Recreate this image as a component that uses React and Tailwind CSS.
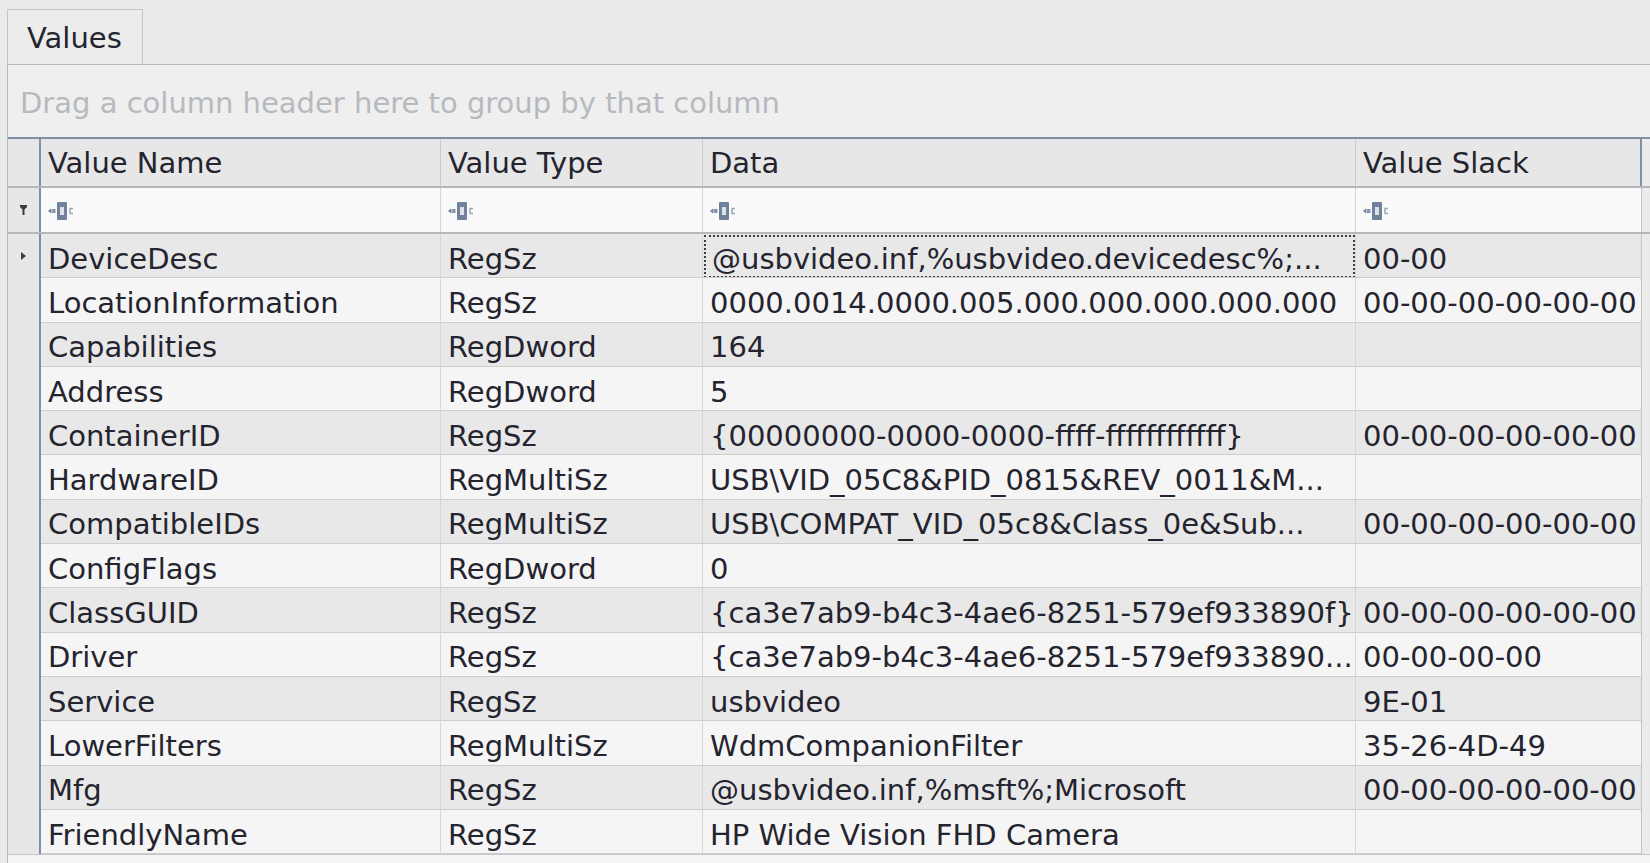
import React from "react";

const rows = [
  ["DeviceDesc", "RegSz", "@usbvideo.inf,%usbvideo.devicedesc%;...", "00-00"],
  ["LocationInformation", "RegSz", "0000.0014.0000.005.000.000.000.000.000", "00-00-00-00-00-00"],
  ["Capabilities", "RegDword", "164", ""],
  ["Address", "RegDword", "5", ""],
  ["ContainerID", "RegSz", "{00000000-0000-0000-ffff-ffffffffffff}", "00-00-00-00-00-00"],
  ["HardwareID", "RegMultiSz", "USB\\VID_05C8&PID_0815&REV_0011&M...", ""],
  ["CompatibleIDs", "RegMultiSz", "USB\\COMPAT_VID_05c8&Class_0e&Sub...", "00-00-00-00-00-00"],
  ["ConfigFlags", "RegDword", "0", ""],
  ["ClassGUID", "RegSz", "{ca3e7ab9-b4c3-4ae6-8251-579ef933890f}", "00-00-00-00-00-00"],
  ["Driver", "RegSz", "{ca3e7ab9-b4c3-4ae6-8251-579ef933890...", "00-00-00-00"],
  ["Service", "RegSz", "usbvideo", "9E-01"],
  ["LowerFilters", "RegMultiSz", "WdmCompanionFilter", "35-26-4D-49"],
  ["Mfg", "RegSz", "@usbvideo.inf,%msft%;Microsoft", "00-00-00-00-00-00"],
  ["FriendlyName", "RegSz", "HP Wide Vision FHD Camera", ""],
];

const headers = ["Value Name", "Value Type", "Data", "Value Slack"];
const colW = ["w-[400px]", "w-[262px]", "w-[653px]", "w-[286px]"];

const indicatorCls =
  "w-[33px] shrink-0 border-r-2 border-[#7f8fa5] bg-[#e7e7e7] flex items-center justify-center";

// the little "a[b]c" contains-operator glyph of the auto filter row
const ContainsIcon = () => (
  <svg width="27" height="20" viewBox="0 0 27 20">
    <path d="M0 10 L3 7.5 L3 12.5 Z" fill="#6e829c" />
    <rect x="3.5" y="8" width="4" height="4" fill="#8696ac" />
    <rect x="9" y="1" width="10" height="18" rx="1" fill="#6e829c" />
    <rect x="12" y="6" width="4" height="8" fill="#dde2e9" />
    <path d="M25 7.5 h-3 v5 h3" stroke="#9aa7b8" strokeWidth="1.5" fill="none" />
  </svg>
);

const FunnelIcon = () => (
  <svg width="7" height="10" viewBox="0 0 7 10">
    <path d="M0 0 H7 V2 L4.5 4.5 V10 H2.5 V4.5 L0 2 Z" fill="#3a3d48" />
  </svg>
);

const RowArrow = () => (
  <svg width="5" height="8" viewBox="0 0 5 8">
    <path d="M0 0 L5 4 L0 8 Z" fill="#3a3d48" />
  </svg>
);

export default function App() {
  return (
    <div className="w-[1650px] h-[863px] bg-[#ebebeb] flex flex-col overflow-hidden text-[29px] text-[#24242f] font-['DejaVu_Sans',sans-serif] leading-none">
      {/* Tab strip */}
      <div className="h-[64px] shrink-0 flex items-end pl-[7px]">
        <div className="w-[136px] h-[55px] border border-b-0 border-[#c4c4c4] bg-[#ececec] flex items-center pl-[19px] pt-[2px]">
          Values
        </div>
      </div>

      {/* Panel */}
      <div className="flex-1 ml-[7px] border-l border-t border-[#b7b9bb] flex flex-col min-h-0">
        {/* Group panel */}
        <div className="h-[72px] shrink-0 bg-[#efefef] flex items-center pl-[12px] pt-[4px] text-[#b6babe]">
          Drag a column header here to group by that column
        </div>

        {/* Column headers */}
        <div className="h-[51px] shrink-0 flex border-t-2 border-b-2 border-t-[#7f8fa5] border-b-[#b3b7bb] bg-[#e7e7e7]">
          <div className={indicatorCls} />
          {headers.map((h, i) => (
            <div
              key={h}
              className={`${colW[i]} shrink-0 flex items-center pl-[7px] pt-[2px] border-r ${
                i === 3 ? "border-r-2 border-[#7f8fa5]" : "border-[#c9cccf]"
              }`}
            >
              {h}
            </div>
          ))}
          <div className="flex-1 bg-[#ebebeb]" />
        </div>

        {/* Auto filter row */}
        <div className="h-[46px] shrink-0 flex border-b-2 border-[#b5b9bc] bg-[#fafafa]">
          <div className={indicatorCls}>
            <FunnelIcon />
          </div>
          {headers.map((h, i) => (
            <div
              key={h}
              className={`${colW[i]} shrink-0 flex items-center pl-[7px] pt-[2px] border-r ${
                i === 3 ? "border-[#c0c4c8]" : "border-[#d4d6d8]"
              }`}
            >
              <ContainsIcon />
            </div>
          ))}
          <div className="flex-1 bg-[#ebebeb]" />
        </div>

        {/* Data rows */}
        <div className="flex flex-col shrink-0">
          {rows.map((r, ri) => (
            <div
              key={r[0]}
              className={`h-[44.3px] flex ${ri % 2 === 0 ? "bg-[#e8e8e8]" : "bg-[#f5f5f5]"}`}
            >
              <div className={indicatorCls}>{ri === 0 && <RowArrow />}</div>
              {r.map((v, ci) => (
                <div
                  key={ci}
                  className={`${colW[ci]} shrink-0 border-r border-b overflow-hidden whitespace-nowrap ${
                    ci === 3 ? "border-r-[#c0c4c8]" : "border-r-[#d4d6d8]"
                  } border-b-[#cdcdcd]`}
                >
                  {ri === 0 && ci === 2 ? (
                    <div className="h-full m-[1px] mr-0 border-2 border-dotted border-[#3c3c44] flex items-center pl-[6px] pt-[6px]">
                      {v}
                    </div>
                  ) : (
                    <div className="h-full flex items-center pl-[7px] pt-[7px]">{v}</div>
                  )}
                </div>
              ))}
              <div className="flex-1 bg-[#ebebeb]" />
            </div>
          ))}
        </div>

        {/* empty area under the grid */}
        <div className="flex-1 bg-[#f4f4f4] border-t border-[#c4c6c8]" />
      </div>
    </div>
  );
}
